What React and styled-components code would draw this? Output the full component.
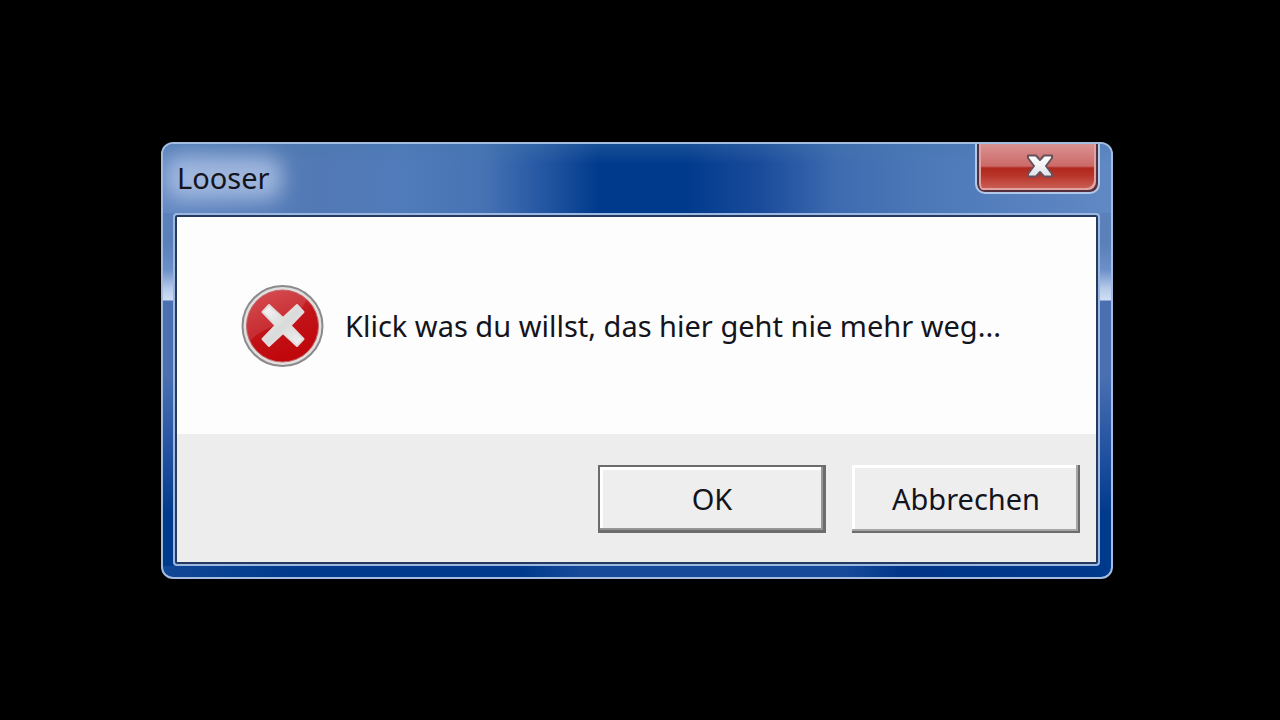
import styled, { createGlobalStyle } from "styled-components";

const App = () => {
  return (
    <>
      <GlobalStyle />
      <Desktop>
        <Dialog role="alertdialog" aria-labelledby="title" aria-describedby="text">
          <TitleBar>
            <Title id="title">Looser</Title>
            <CloseButton type="button" aria-label="Schließen">
              <CloseIcon />
            </CloseButton>
          </TitleBar>
          <Client>
            <Message>
              <ErrorIcon />
              <MessageText id="text">
                Klick was du willst, das hier geht nie mehr weg...
              </MessageText>
            </Message>
            <Footer>
              <DialogButton type="button" $isDefault>
                OK
              </DialogButton>
              <DialogButton type="button">Abbrechen</DialogButton>
            </Footer>
          </Client>
        </Dialog>
      </Desktop>
    </>
  );
};

const CloseIcon = () => (
  <svg width="30" height="26" viewBox="0 0 30 26" aria-hidden="true">
    <defs>
      <linearGradient id="closeFill" x1="0" y1="0" x2="0" y2="1">
        <stop offset="0" stopColor="#ffffff" />
        <stop offset="1" stopColor="#dfe3e6" />
      </linearGradient>
    </defs>
    <path
      d="M3 2.500H11L15 7 19 2.500H27V5L21 13 27 21V23.500H19L15 19 11 23.500H3V21L9 13 3 5z"
      fill="url(#closeFill)"
      stroke="#66525c"
      strokeWidth="2"
      strokeLinejoin="round"
    />
  </svg>
);

const ErrorIcon = () => (
  <svg width="84" height="84" viewBox="0 0 84 84" aria-hidden="true">
    <defs>
      <linearGradient id="errorFill" x1="0.2" y1="0" x2="0.6" y2="1">
        <stop offset="0" stopColor="#d23c42" />
        <stop offset="0.5" stopColor="#c01419" />
        <stop offset="1" stopColor="#c00509" />
      </linearGradient>
      <linearGradient id="errorGloss" x1="0" y1="0" x2="0.7" y2="1">
        <stop offset="0" stopColor="#ffffff" stopOpacity="0.08" />
        <stop offset="1" stopColor="#ffffff" stopOpacity="0.12" />
      </linearGradient>
      <linearGradient id="errorCross" x1="0" y1="0" x2="1" y2="1">
        <stop offset="0" stopColor="#f8f8f8" />
        <stop offset="0.5" stopColor="#d9dada" />
        <stop offset="1" stopColor="#f2f2f2" />
      </linearGradient>
    </defs>
    <circle cx="41.500" cy="42" r="40" fill="#e2dedd" stroke="#8a8a8a" strokeWidth="2" />
    <circle cx="41.500" cy="42" r="36" fill="url(#errorFill)" stroke="#c0666a" strokeWidth="1" />
    <path
      d="M6 44A35.500 35.500 0 0 1 65.500 16C58 32 48 37 36 41 24 45 14 51 9 57Q6 51 6 44z"
      fill="url(#errorGloss)"
    />
    <path
      d="M28 21 42 34 56 21 62.500 28 49.500 41.500 62.500 55 56 62 42 49 28 62 21.500 55 34.500 41.500 21.500 28z"
      fill="url(#errorCross)"
      stroke="#e4dcdc"
      strokeWidth="2"
      strokeLinejoin="round"
    />
  </svg>
);

const GlobalStyle = createGlobalStyle`
  * {
    box-sizing: border-box;
  }

  body {
    margin: 0;
    background-color: #000;
    color: #14141c;
    font-family: "Noto Sans", sans-serif;
    font-size: 29px;
    line-height: 40px;
  }
`;

const Desktop = styled.main`
  min-height: 100vh;
  padding: 142px 167px 140px 161px;
`;

const Dialog = styled.section`
  border: 2px solid #a3bce0;
  border-radius: 12px;
  padding: 0 11px 11px 10px;
  background:
    linear-gradient(
        90deg,
        #124796 0%,
        #003a8c 14%,
        #003a8c 38%,
        #174a99 44%,
        #174a99 72%,
        #003588 78%,
        #003a8c 100%
      )
      bottom / 100% 11px no-repeat,
    linear-gradient(
      180deg,
      #5f84bf 0,
      #5a80ba 100px,
      #6c90c8 126px,
      #b4c9ea 144px,
      #cfdef5 156px,
      #4a70b2 157px,
      #4a70b2 230px,
      #1c4d9e 320px,
      #003a8c 370px
    );
`;

const TitleBar = styled.header`
  display: flex;
  justify-content: space-between;
  align-items: flex-start;
  height: 69px;
  margin: 0 -11px 0 -10px;
  padding: 0 11px 0 14px;
  border-radius: 10px 10px 0 0;
  overflow: hidden;
  background:
    linear-gradient(180deg, rgba(70, 120, 170, 0.35) 0, rgba(70, 120, 170, 0) 20px),
    linear-gradient(
      90deg,
      #6388c2 0%,
      #5279b4 16%,
      #507bba 26%,
      #4672b4 34%,
      #1f539f 41%,
      #003a8c 46%,
      #003a8c 55%,
      #1a4b9b 63%,
      #3e6bb0 71%,
      #4c78b8 80%,
      #6089c4 100%
    );
`;

const Title = styled.h1`
  position: relative;
  isolation: isolate;
  margin: 14px 0 0;
  font-size: inherit;
  font-weight: 400;

  /* soft glass glow behind the caption */
  &::before {
    content: "";
    position: absolute;
    inset: -2px -12px;
    z-index: -1;
    border-radius: 16px;
    background-color: rgba(176, 196, 230, 0.8);
    filter: blur(10px);
  }
`;

const CloseButton = styled.button`
  display: flex;
  justify-content: center;
  align-items: center;
  width: 125px;
  height: 50px;
  padding: 0 0 4px 4px;
  border: 2px solid #b3c8e8;
  border-top: 0;
  border-radius: 0 0 10px 10px;
  background: linear-gradient(
    180deg,
    #d99292 0%,
    #cc6a68 46%,
    #b0281e 50%,
    #b83328 65%,
    #cf6a60 100%
  );
  box-shadow:
    inset 2px 0 #54303c,
    inset -2px -2px #54303c,
    inset 4px 0 #dfa3a3,
    inset -4px -4px #dfa3a3;
`;

const Client = styled.div`
  border: 2px solid #243a60;
  border-radius: 2px;
  outline: 2px solid #9db8e0;
  margin: 2px;
  background-color: #fdfdfd;
`;

const Message = styled.div`
  display: flex;
  align-items: center;
  gap: 20px;
  min-height: 217px;
  padding: 0 64px;
`;

const MessageText = styled.p`
  margin: 0;
  white-space: nowrap;
`;

const Footer = styled.footer`
  display: flex;
  justify-content: flex-end;
  gap: 26px;
  padding: 31px 16px 29px;
  background-color: #ededed;
`;

const DialogButton = styled.button`
  width: 228px;
  height: 68px;
  padding: 0;
  border: 0;
  background-color: #eee;
  color: inherit;
  font: inherit;
  box-shadow: ${(props) =>
    props.$isDefault
      ? `inset 2px 2px #6c6c6c, inset -3px -3px #6c6c6c,
         inset -5px -5px #969696, inset 5px 5px #fff`
      : `inset -2px -2px #6c6c6c, inset -4px -4px #a6a6a6,
         inset 3px 3px #fff`};
`;

export default App;
